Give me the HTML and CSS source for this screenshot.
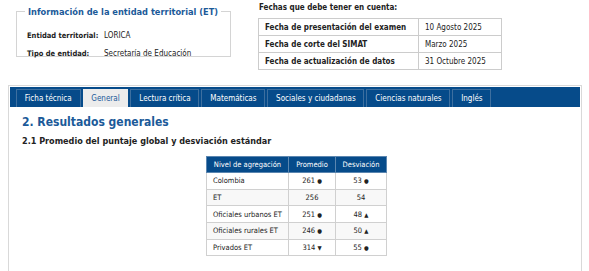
FILE: index.html
```html
<!DOCTYPE html>
<html>
<head>
    <meta charset="utf-8">
    <link rel="stylesheet" href="styles.css">
</head>
<body>
    <div id="top">
        <fieldset id="entidad">
            <legend>Información de la entidad territorial (ET)</legend>
            <div class="fila"><span class="etiqueta">Entidad territorial:</span><span>LORICA</span></div>
            <div class="fila"><span class="etiqueta">Tipo de entidad:</span><span>Secretaría de Educación</span></div>
        </fieldset>
        <div id="fechas">
            <div class="fechasTitulo">Fechas que debe tener en cuenta:</div>
            <table id="tablaFechas">
                <tr><th>Fecha de presentación del examen</th><td>10 Agosto 2025</td></tr>
                <tr><th>Fecha de corte del SIMAT</th><td>Marzo 2025</td></tr>
                <tr><th>Fecha de actualización de datos</th><td>31 Octubre 2025</td></tr>
            </table>
        </div>
    </div>
    <div id="panel">
        <ul id="tabs">
            <li>Ficha técnica</li>
            <li class="activo">General</li>
            <li>Lectura crítica</li>
            <li>Matemáticas</li>
            <li>Sociales y ciudadanas</li>
            <li>Ciencias naturales</li>
            <li>Inglés</li>
        </ul>
        <h2>2. Resultados generales</h2>
        <h3>2.1 Promedio del puntaje global y desviación estándar</h3>
        <table id="resultados">
            <colgroup><col class="c1"><col class="c2"><col class="c3"></colgroup>
            <tr><th>Nivel de agregación</th><th>Promedio</th><th>Desviación</th></tr>
            <tr><td>Colombia</td><td class="num">261 <span class="sim">●</span></td><td class="num">53 <span class="sim">●</span></td></tr>
            <tr><td>ET</td><td class="num">256</td><td class="num">54</td></tr>
            <tr><td>Oficiales urbanos ET</td><td class="num">251 <span class="sim">●</span></td><td class="num">48 <span class="sim">▲</span></td></tr>
            <tr><td>Oficiales rurales ET</td><td class="num">246 <span class="sim">●</span></td><td class="num">50 <span class="sim">▲</span></td></tr>
            <tr><td>Privados ET</td><td class="num">314 <span class="sim">▼</span></td><td class="num">55 <span class="sim">●</span></td></tr>
        </table>
    </div>
</body>
</html>
```
FILE: styles.css
```css
body {
    margin: 0;
    font-family: "DejaVu Sans Condensed", "DejaVu Sans", sans-serif;
    font-stretch: condensed;
    font-size: 8px;
    color: #222;
    background: #fff;
}
#top {
    display: flex;
    height: 85px;
}
#entidad {
    margin: 6px 0 0 16px;
    padding: 9px 0 0 10px;
    width: 203px;
    height: 40px;
    border: 1px solid #d4d4d4;
    box-sizing: content-box;
    min-width: 0;
}
#entidad legend {
    color: #1b5a99;
    font-weight: bold;
    font-size: 9.2px;
    padding: 0 3px;
    margin-left: -2px;
    white-space: nowrap;
}
.fila {
    display: flex;
    height: 18px;
    align-items: center;
    white-space: nowrap;
}
.etiqueta {
    flex: 0 0 77px;
    font-weight: bold;
    font-size: 7.5px;
}
#fechas {
    margin-left: 27px;
}
.fechasTitulo {
    font-weight: bold;
    margin: 3px 0 0 1px;
    height: 15px;
}
#tablaFechas {
    border-collapse: collapse;
    border: 1px solid #ccc;
    width: 244px;
}
#tablaFechas th, #tablaFechas td {
    border: 1px solid #ccc;
    height: 16px;
    padding: 0 6px;
    text-align: left;
}
#tablaFechas th {
    width: 147px;
}
#panel {
    margin: 0 7px 0 8px;
    border: 1px solid #d9d9d9;
    border-bottom: none;
    padding: 1px 1px 20px 1px;
}
#tabs {
    list-style: none;
    margin: 0;
    padding: 2px 0 0 6px;
    background: #064b8a;
    display: flex;
    gap: 2px;
    height: 18px;
}
#tabs li {
    color: #fff;
    border: 1px solid #3d6f9f;
    border-bottom: none;
    padding: 0 7.8px;
    line-height: 17px;
}
#tabs li.activo {
    background: #ececec;
    color: #1b5a99;
    border-color: #ececec;
}
h2 {
    color: #1b5a99;
    font-size: 12px;
    margin: 8px 0 0 12px;
}
h3 {
    font-size: 9px;
    margin: 7px 0 0 12px;
}
#resultados {
    border-collapse: collapse;
    table-layout: fixed;
    margin: 10px 0 0 196px;
    width: 180px;
    font-size: 7.5px;
}
.c1 {
    width: 82px;
}
.c2 {
    width: 47px;
}
.c3 {
    width: 51px;
}
#resultados th {
    background: #064b8a;
    color: #fff;
    font-weight: normal;
    height: 15px;
    padding: 0;
    border: 1px solid #5b86b0;
}
#resultados td {
    border: 1px solid #d0d0d0;
    height: 15.7px;
    padding: 0 6px;
}
#resultados tr:nth-child(odd) td {
    background: #f8f8f8;
}
#resultados td.num {
    text-align: center;
}
.sim {
    font-size: 6px;
}
```
